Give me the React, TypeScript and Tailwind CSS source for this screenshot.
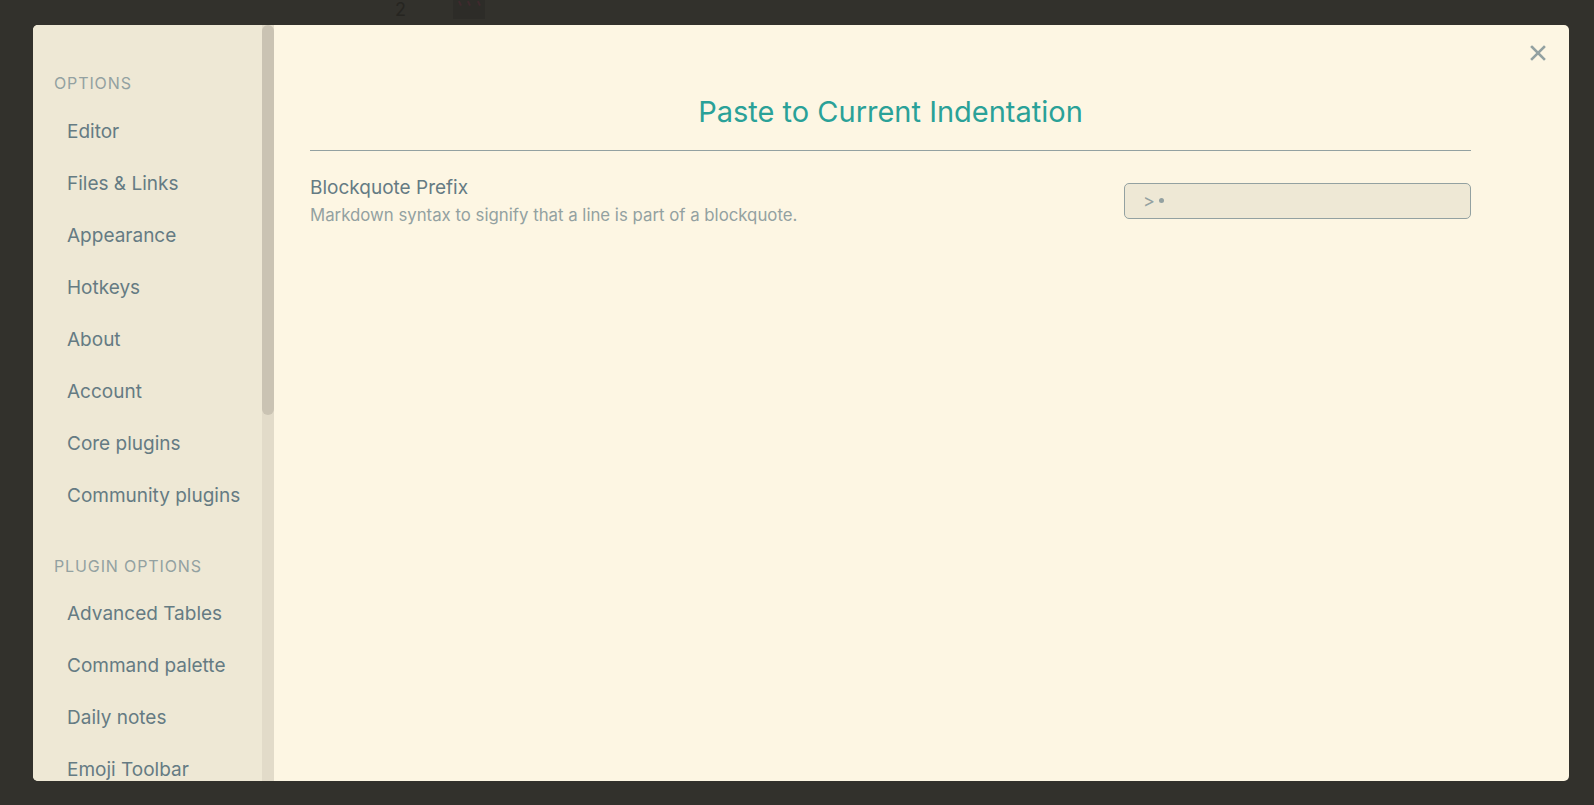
import React from "react";

const optionItems = [
  "Editor",
  "Files & Links",
  "Appearance",
  "Hotkeys",
  "About",
  "Account",
  "Core plugins",
  "Community plugins",
];

const pluginItems = ["Advanced Tables", "Command palette", "Daily notes", "Emoji Toolbar"];

function NavItem({ label }: { label: string }) {
  return (
    <div className="h-[52px] flex items-center pl-[34px] text-[19px] text-[#657b83] whitespace-nowrap">
      {label}
    </div>
  );
}

function GroupTitle({ label }: { label: string }) {
  return (
    <div className="h-[36px] flex items-center pl-[21px] text-[16px] tracking-[0.055em] uppercase text-[#93a1a1] whitespace-nowrap">
      {label}
    </div>
  );
}

export default function App() {
  return (
    <div
      className="w-[1594px] h-[805px] bg-[#32312c] overflow-hidden flex flex-col"
      style={{ fontFamily: "Inter, 'Noto Sans', sans-serif" }}
    >
      {/* faded editor behind the overlay */}
      <div className="h-[25px] flex items-start shrink-0">
        <div className="ml-[395px] text-[18px] leading-[20px] text-[#262521]">2</div>
        <div className="ml-[47px] w-[32px] h-[19px] bg-[#2d2c28] flex items-start justify-center gap-[8px] pt-[1px]">
          <span className="w-[1.5px] h-[5px] bg-[#3f2a2e] rotate-[-25deg]" />
          <span className="w-[1.5px] h-[5px] bg-[#3f2a2e] rotate-[-25deg]" />
          <span className="w-[1.5px] h-[5px] bg-[#3f2a2e] rotate-[-25deg]" />
        </div>
      </div>

      {/* modal */}
      <div className="relative ml-[33px] mr-[25px] h-[756px] rounded-[5px] overflow-hidden flex bg-[#fdf6e3]">
        {/* sidebar */}
        <div className="w-[241px] shrink-0 flex bg-[#eee8d5]">
          <div className="flex-1 overflow-hidden pt-[40px]">
            <GroupTitle label="Options" />
            <div className="mt-[5px]">
              {optionItems.map((i) => (
                <NavItem key={i} label={i} />
              ))}
            </div>
            <div className="mt-[26px]">
              <GroupTitle label="Plugin options" />
            </div>
            <div className="mt-[4px]">
              {pluginItems.map((i) => (
                <NavItem key={i} label={i} />
              ))}
            </div>
          </div>
          <div className="w-[12px] shrink-0 bg-[#e2dbc9]">
            <div className="h-[390px] rounded-[6px] bg-[#cac3b3]" />
          </div>
        </div>

        {/* main content */}
        <div className="flex-1 pl-[36px] pr-[98px] pt-[67px]">
          <div className="h-[40px] flex items-center justify-center text-[29px] text-[#2aa198] whitespace-nowrap">
            Paste to Current Indentation
          </div>
          <div className="mt-[18px] h-px bg-[#93a1a1]" />
          <div className="pt-[24px] flex items-center justify-between">
            <div>
              <div className="text-[19px] leading-[26px] text-[#657b83]">Blockquote Prefix</div>
              <div className="mt-[2px] text-[16.8px] leading-[24px] text-[#93a1a1]">
                Markdown syntax to signify that a line is part of a blockquote.
              </div>
            </div>
            <div className="w-[347px] h-[36px] -mt-[1px] rounded-[5px] border border-[#93a1a1] bg-[#eee8d5] flex items-center pl-[18px] text-[18px] text-[#93a1a1]">
              <span>&gt;</span>
              <span className="ml-[4px] w-[5px] h-[5px] rounded-full bg-[#93a1a1]" />
            </div>
          </div>
        </div>

        {/* close button */}
        <button className="absolute top-[20px] right-[23px] w-[16px] h-[16px]">
          <svg width="16" height="16" viewBox="0 0 16 16" fill="none" stroke="#93a1a1" strokeWidth="2.6" strokeLinecap="square">
            <line x1="2" y1="2" x2="14" y2="14" />
            <line x1="14" y1="2" x2="2" y2="14" />
          </svg>
        </button>
      </div>
    </div>
  );
}
